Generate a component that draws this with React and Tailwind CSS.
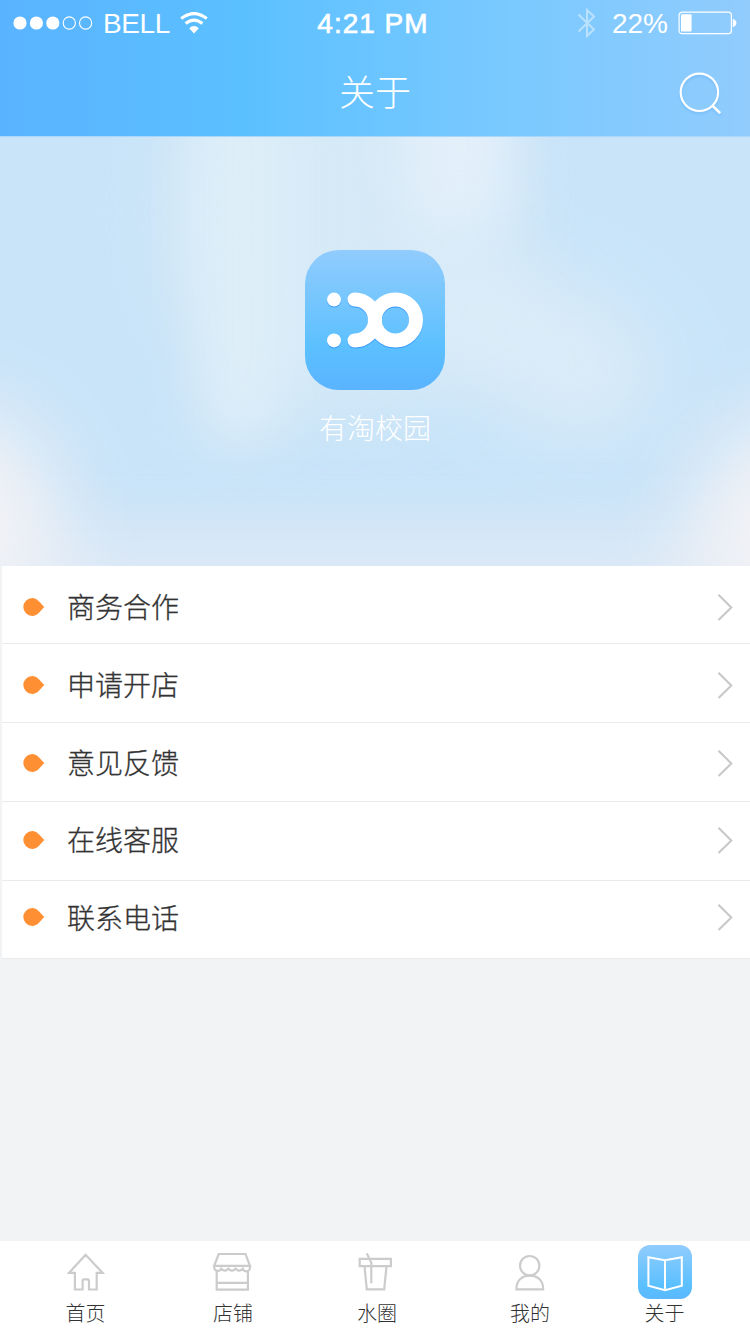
const filas = [
  { texto: '商务合作', alto: 'h-[78px] pt-1' },
  { texto: '申请开店', alto: 'h-[79px] pt-[3px]' },
  { texto: '意见反馈', alto: 'h-[79px] pt-px' },
  { texto: '在线客服', alto: 'h-[79px] pb-[3px]' },
  { texto: '联系电话', alto: 'h-[78px] pb-[5px]' },
]

function Senal() {
  return (
    <svg width="80" height="16" viewBox="0 0 80 16" fill="#fff">
      <circle cx="7" cy="8" r="6.6" />
      <circle cx="23.4" cy="8" r="6.6" />
      <circle cx="39.8" cy="8" r="6.6" />
      <g fill="none" stroke="#fff" strokeWidth="1.1">
        <circle cx="56.3" cy="8" r="6.1" />
        <circle cx="72.6" cy="8" r="6.1" />
      </g>
    </svg>
  )
}

function Wifi() {
  return (
    <svg width="28" height="22" viewBox="0 0 28 22" fill="none" stroke="#fff">
      <path d="M1.2 6.4Q14-3.4 26.8 6.4" strokeWidth="3.2" />
      <path d="M5.6 11.6Q14 4.8 22.4 11.6" strokeWidth="3.2" />
      <path d="M9.2 16.2Q14 12 18.8 16.2L14 21.4Z" fill="#fff" stroke="none" />
    </svg>
  )
}

function Bluetooth() {
  return (
    <svg width="19" height="32" viewBox="0 0 19 32" fill="none" stroke="#fff" strokeWidth="2" opacity="0.45">
      <path d="M1.5 7.5 17 22.5 10 29V3L17 9.5 1.5 24.5" />
    </svg>
  )
}

function Bateria() {
  return (
    <svg width="59" height="24" viewBox="0 0 59 24">
      <rect x="1.1" y="1.1" width="52.3" height="21.6" rx="3" fill="none" stroke="#fff" strokeWidth="1.2" />
      <rect x="3" y="3.2" width="10.6" height="17.4" rx="1" fill="#fff" />
      <path d="M54.8 8q3.6.8 3.6 4t-3.6 4z" fill="#fff" />
    </svg>
  )
}

function Lupa() {
  return (
    <svg
      width="44"
      height="44"
      viewBox="0 0 44 44"
      fill="none"
      stroke="#fff"
      strokeWidth="2.2"
      className="drop-shadow-[0_2px_1px_rgba(60,150,240,0.25)]"
    >
      <circle cx="21.4" cy="22.3" r="18.7" />
      <path d="m34 35.2 8.2 8" strokeWidth="2.6" />
    </svg>
  )
}

function Logo() {
  return (
    <div className="size-[140px] rounded-[34px] bg-linear-[180deg,#91ccfd_0%,#5bc0ff_70%,#5ab3ff_100%]">
      <svg width="140" height="140" viewBox="0 0 140 140" className="drop-shadow-[0_1.5px_0.7px_rgba(40,140,255,0.8)]">
        <circle cx="29" cy="49.6" r="7" fill="#fff" />
        <circle cx="29" cy="90.4" r="7" fill="#fff" />
        <g fill="none" stroke="#fff" strokeWidth="14" strokeLinecap="round">
          <path d="M49.5 49.5a20.5 20.5 0 0 1 0 41" />
          <circle cx="90.4" cy="70" r="20.6" />
        </g>
      </svg>
    </div>
  )
}

// manchas difuminadas detrás del logo
function Fondo() {
  return (
    <div className="absolute inset-0 overflow-hidden">
      <div className="absolute top-[-120px] left-[165px] h-[390px] w-[350px] rounded-full bg-[#d6eaf7] blur-[36px]" />
      <div className="absolute top-[-60px] left-[200px] h-[370px] w-[85px] rounded-full bg-[#deeef8] blur-[28px]" />
      <div className="absolute top-[-90px] left-[405px] h-[190px] w-[105px] rounded-full bg-[#e3effa] blur-[26px]" />
      <div className="absolute top-[140px] left-[400px] h-[130px] w-[260px] rotate-[28deg] rounded-full bg-[#dbecf8] blur-[38px]" />
      <div className="absolute bottom-[-60px] left-[-20px] h-[100px] w-[790px] bg-[#dce9f6] blur-[30px]" />
      <div className="absolute bottom-[-70px] left-[-170px] h-[230px] w-[230px] rounded-full bg-[#f3f2f5] blur-[42px]" />
      <div className="absolute right-[-170px] bottom-[-80px] h-[230px] w-[230px] rounded-full bg-[#f3f2f5] blur-[42px]" />
    </div>
  )
}

function Gota() {
  return (
    <svg width="22" height="20" viewBox="0 0 22 20" fill="#ff8f33">
      <path d="M9.3 1a9 9 0 0 0 0 18C14 19 16.5 15 21.3 10 16.5 5 14 1 9.3 1Z" />
    </svg>
  )
}

function Flecha() {
  return (
    <svg width="18" height="28" viewBox="0 0 18 28" fill="none" stroke="#c8c8c8" strokeWidth="2.1">
      <path d="M2.5 1.8 15.3 14.4 2.5 27" />
    </svg>
  )
}

function IconoTab({ children }) {
  return (
    <svg width="40" height="40" viewBox="0 0 40 40" fill="none" stroke="#ccc" strokeWidth="2.2">
      {children}
    </svg>
  )
}

function Casa() {
  return (
    <IconoTab>
      <path d="M19.6 2.8 3 20.9h5.9v16.6h7.7V29q0-1.6 1.6-1.6h3.2q1.6 0 1.6 1.6v8.5h7.7V20.9h5.9Z" />
    </IconoTab>
  )
}

function Tienda() {
  return (
    <IconoTab>
      <path d="M5.7 2h26.8L37 13.8H1.2Z" />
      <path d="M1.2 13.8v2a3.7 3.7 0 0 0 7 1 4.6 4.6 0 0 0 7.2 0 4.6 4.6 0 0 0 7.2 0 4.6 4.6 0 0 0 7.2 0 3.7 3.7 0 0 0 7.2-1v-2M3.7 19.5v18.2h31.2V19.5M3.7 30.8h31.2" />
    </IconoTab>
  )
}

function Vaso() {
  return (
    <IconoTab>
      <path d="M2.7 6.8h31.2v7.3H2.7ZM7.5 14.2l2.3 23.2h17.4l2.3-23.2M9.8 1.4l4.5 9.4v20.5" />
    </IconoTab>
  )
}

function Persona() {
  return (
    <IconoTab>
      <circle cx="19.7" cy="13.7" r="9.7" />
      <path d="M6.4 37.4C6.4 29 11.5 23.6 19.8 23.6S33.2 29 33.2 37.4Z" />
    </IconoTab>
  )
}

function Libro() {
  return (
    <svg width="54" height="54" viewBox="0 0 54 54" fill="none" stroke="#fff" strokeWidth="2">
      <path d="M10.4 12.2 27 15.2l16.8-3v28.6L27 45.2l-16.6-4.4ZM27 15.2v30" />
    </svg>
  )
}

const tabs = [
  { texto: '首页', Icono: Casa },
  { texto: '店铺', Icono: Tienda },
  { texto: '水圈', Icono: Vaso },
  { texto: '我的', Icono: Persona },
  { texto: '关于', Icono: Libro, activo: true },
]

export default function App() {
  return (
    <div className="flex h-[1334px] w-[750px] flex-col overflow-hidden bg-[#f2f3f5] font-['Noto_Sans_CJK_SC',sans-serif] font-light text-[#333]">
      <header className="h-[137px] shrink-0 border-b border-[#a9d6fb] bg-linear-[90deg,#5ab3ff_0%,#5bc0ff_32%,#75c8ff_62%,#91ccfd_100%] text-white">
        <div className="grid h-[46px] grid-cols-3 items-center px-[13px] font-['Liberation_Sans',Arial,sans-serif] text-[28px] leading-none font-normal">
          <div className="flex items-center">
            <Senal />
            <span className="ml-[10px] pt-0.5 tracking-[-0.4px]">BELL</span>
            <span className="ml-[10px]">
              <Wifi />
            </span>
          </div>
          <div className="pt-0.5 pr-1 text-center tracking-[1px] whitespace-nowrap [-webkit-text-stroke:0.7px_white]">4:21 PM</div>
          <div className="flex items-center justify-end">
            <Bluetooth />
            <span className="mr-[10px] ml-[16px] pt-0.5">22%</span>
            <Bateria />
          </div>
        </div>
        <div className="grid h-[90px] grid-cols-[1fr_auto_1fr] items-center px-7">
          <h1 className="col-start-2 pb-[3px] text-4xl leading-none font-light">关于</h1>
          <button className="justify-self-end pt-0.5">
            <Lupa />
          </button>
        </div>
      </header>

      <section className="relative h-[429px] shrink-0 bg-[#c9e4f9]">
        <Fondo />
        <div className="relative flex flex-col items-center pt-[113px]">
          <Logo />
          <p className="mt-[22px] text-[28px] leading-[30px] text-white">有淘校园</p>
        </div>
      </section>

      <ul className="ml-[2px] shrink-0 bg-white">
        {filas.map((f) => (
          <li key={f.texto} className={`flex items-center border-b border-[#e9eaeb] pr-[16px] pl-[21px] ${f.alto}`}>
            <Gota />
            <span className="ml-[22px] flex-1 pb-px text-[28px] leading-none [-webkit-text-stroke:0.3px_#333]">{f.texto}</span>
            <Flecha />
          </li>
        ))}
      </ul>

      <nav className="mt-auto grid h-[93px] shrink-0 grid-cols-[171px_124px_164px_142px_127px] bg-white">
        {tabs.map(({ texto, Icono, activo }) => (
          <a key={texto} className="flex flex-col items-center">
            {activo ? (
              <span className="mt-[4px] size-[54px] rounded-xl bg-linear-[180deg,#91ccfd_0%,#5bc0ff_75%,#5ab8ff_100%]">
                <Icono />
              </span>
            ) : (
              <span className="mt-[11px] mb-[7px]">
                <Icono />
              </span>
            )}
            <span className="mt-[4px] text-[20px] leading-5">{texto}</span>
          </a>
        ))}
      </nav>
    </div>
  )
}
